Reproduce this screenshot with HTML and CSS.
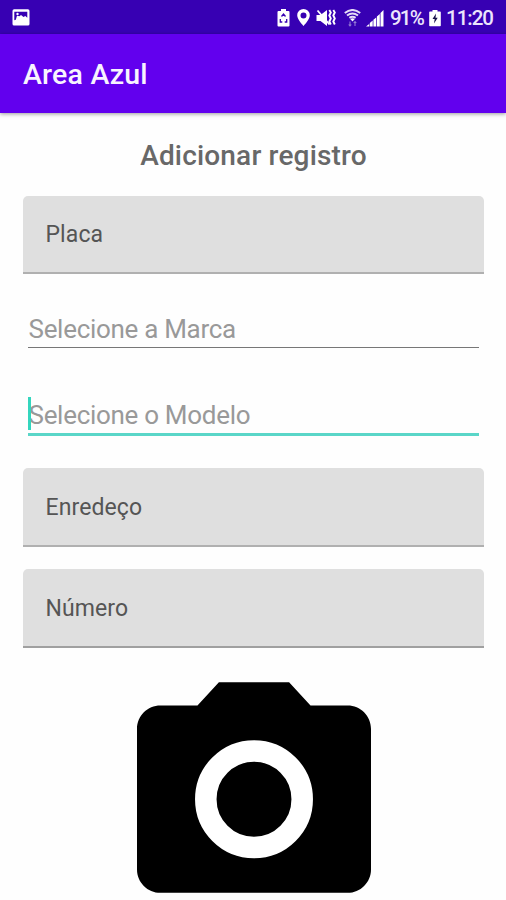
FILE: index.html
```html
<!DOCTYPE html>
<html lang="pt-BR">
<head>
<meta charset="utf-8">
<title>Area Azul</title>
<link rel="stylesheet" href="styles.css">
</head>
<body>
<div class="status">
  <svg class="picture" width="18" height="17" viewBox="0 0 18 17"><rect x=".5" y=".3" width="17" height="16.2" rx="1.6" fill="#fff"/><path d="M2.300 2.800h13v6l-2-1.800-1.800 1-2.500-2-1.500 1.200-2.500-.5-1.200 4-1.500.5z" fill="#3700b3"/><circle cx="5.500" cy="5" r="1.200" fill="#fff"/></svg>
  <div class="indicators">
    <svg class="saver" width="13" height="18" viewBox="0 0 13 18"><path d="M4 0h5v2h2.500q1 0 1 1v13.500q0 1-1 1h-10q-1 0-1-1V3q0-1 1-1H4z" fill="#fff"/><path d="M4.500 7.500l2-2.500 2 2.500M3.300 10v3h2M9.700 10v3h-2" fill="none" stroke="#3700b3" stroke-width="1.300"/></svg>
    <svg class="pin" width="13" height="18" viewBox="0 0 13 18"><path fill="#fff" fill-rule="evenodd" d="M6.500 0A6.300 6.300 0 0 0 .2 6.300C.2 10.500 6.500 17 6.500 17S12.800 10.500 12.800 6.300A6.300 6.300 0 0 0 6.500 0zm0 3.400a3 3 0 1 1 0 6 3 3 0 0 1 0-6z"/></svg>
    <svg class="mute" width="20" height="18" viewBox="0 0 20 18"><path d="M.5 6h4L11 1v16l-6.500-5h-4z" fill="#fff"/><path d="M1.500 1.500l12 14" stroke="#fff" stroke-width="1.800"/><path d="M13.300 1l1.500 2.500-1.500 3 1.500 3-1.500 3 1.500 3M17.300 1l1.500 2.500-1.500 3 1.500 3-1.500 3 1.500 3" fill="none" stroke="#fff" stroke-width="1.900"/></svg>
    <svg class="wifi" width="17" height="18" viewBox="0 0 17 18"><g fill="none" stroke="#e4dcf5" stroke-width="2"><path d="M.8 4Q8.500-2 16.200 4M3 6.500Q8.500 2.400 14 6.500M5.400 8.900Q8.500 6.800 11.600 8.900"/></g><path d="M6.200 10q2.300-1.500 4.600 0l-2.300 2.500z" fill="#fff"/><path d="M6 12.500v4.500M4.700 15.500L6 17l1.300-1.500M11 17v-4.500M9.700 14l1.300-1.500 1.300 1.500" fill="none" stroke="#9479d4" stroke-width="1.100"/></svg>
    <svg class="signal" width="18" height="18" viewBox="0 0 18 18"><g fill="#fff"><path d="M0 17.500l3.200-2.500v2.500zM3.800 14l2.900-2.400v5.900H3.800zM7.400 10.800l2.800-2.300v9H7.400zM10.900 7.500l2.900-2.400v12.400h-2.900z"/><path d="M14.500 4l3-3v16.500h-3z"/></g></svg>
    <span class="percent">91%</span>
    <svg class="battery" width="12" height="18" viewBox="0 0 12 18"><path d="M3.500 1h5v1.500H11q.8 0 .8.800v13.200q0 .8-.8.800H1q-.8 0-.8-.8V3.300q0-.8.8-.8h2.500z" fill="#fff"/><path d="M7 4.500L3.500 10h2.200L5 14.500 8.700 8.700H6.500z" fill="#17104a"/></svg>
    <span class="clock">11:20</span>
  </div>
</div>
<header class="appbar"><h1>Area Azul</h1></header>
<main>
  <h2><span>Adicionar registro</span></h2>
  <div class="box placa"><span>Placa</span></div>
  <div class="line marca"><span>Selecione a Marca</span></div>
  <div class="line modelo"><span>Selecione o Modelo</span></div>
  <div class="box endereco"><span>Enredeço</span></div>
  <div class="box numero"><span>Número</span></div>
  <svg class="camera" viewBox="2 2 20 18"><path d="M9 2L7.170 4H4c-1.100 0-2 .9-2 2v12c0 1.100.9 2 2 2h16c1.100 0 2-.9 2-2V6c0-1.100-.9-2-2-2h-3.170L15 2z"/><circle cx="12" cy="12" r="4.120" fill="none" stroke="#fff" stroke-width="1.840"/></svg>
</main>
</body>
</html>
```
FILE: styles.css
```css
* { box-sizing: border-box; }
body { margin: 0; width: 506px; height: 900px; overflow: hidden; background: #fefefe; font-family: Roboto, "Liberation Sans", sans-serif; }
h1, h2 { margin: 0; }
svg { display: block; flex: none; }
.status { height: 34px; background: #3700b3; color: #ece5fc; display: flex; justify-content: space-between; padding: 9px 12px 0; }
.indicators { display: flex; font-size: 20.5px; line-height: 19px; font-weight: 500; }
.pin { margin-left: 7px; }
.mute { margin-left: 6px; }
.wifi { margin-left: 8px; }
.signal { margin-left: 5px; }
.percent { margin-left: 6px; width: 34px; letter-spacing: -1.8px; white-space: nowrap; }
.battery { margin-left: 5px; }
.clock { margin-left: 5px; width: 48px; letter-spacing: -1px; white-space: nowrap; }
.appbar { height: 79px; background: #6200ee; color: #f8f3ff; display: flex; align-items: center; padding: 3px 23px 0; position: relative; box-shadow: 0 1px 4px rgba(0, 0, 0, .4); }
h1 { font-size: 28.5px; font-weight: 500; line-height: 34px; letter-spacing: .2px; }
main { padding: 0 22px 0 23px; display: flex; flex-direction: column; }
h2 { margin-top: 26px; height: 57px; text-align: center; font-size: 28px; line-height: 34px; font-weight: 500; letter-spacing: .18px; color: #686868; }
.box { height: 78px; background: #dfdfdf; border-radius: 5px 5px 0 0; border-bottom: 2px solid #b0b0b0; padding-left: 22.5px; font-size: 23px; line-height: 77px; color: #555; letter-spacing: .1px; }
.line { margin: 0 5px; color: #999; font-size: 26px; line-height: 34px; letter-spacing: -.3px; position: relative; }
.line span { padding-left: .5px; }
.marca { margin-top: 38px; height: 36px; border-bottom: 1px solid #777; }
.modelo { margin-top: 50px; height: 38px; border-bottom: 3px solid #5ad6c8; }
.modelo::before { content: ""; position: absolute; left: 0; top: -1px; width: 3px; height: 33px; background: #34d6be; }
.endereco { margin-top: 32px; height: 79px; line-height: 80px; }
.numero { margin-top: 22px; height: 79px; line-height: 80px; border-bottom-color: #a0a0a0; }
.camera { width: 234px; height: 211px; margin: 34px 0 0 114px; }
```
